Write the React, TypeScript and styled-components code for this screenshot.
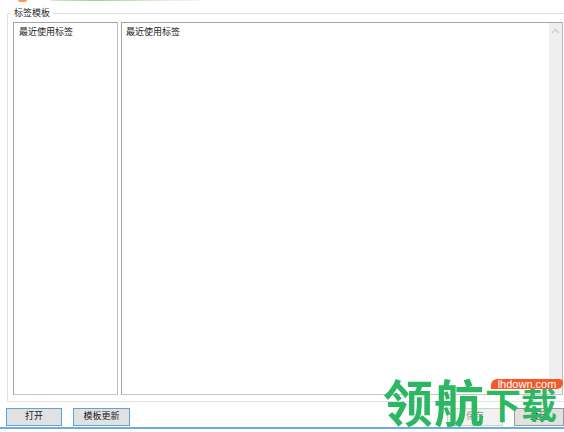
import React from "react";
import styled, { createGlobalStyle } from "styled-components";

const Global = createGlobalStyle`
  html, body { margin: 0; padding: 0; background: #fff; }
  body { font-family: "Liberation Sans", "Noto Sans CJK SC", sans-serif; }
`;

const Page = styled.div`
  position: relative;
  width: 564px;
  height: 432px;
  overflow: hidden;
  background: #fff;
  display: flex;
  flex-direction: column;
`;

const TopStrip = styled.div`
  height: 3px;
  display: flex;
  align-items: flex-start;
  padding-left: 18px;
  gap: 24px;
  flex-shrink: 0;
`;

const OrangeMark = styled.div`
  width: 9px;
  height: 2px;
  border-radius: 0 0 5px 5px;
  background: #f0a050;
`;

const GreenTrace = styled.div`
  width: 148px;
  height: 1px;
  background: linear-gradient(90deg, #cfe8c8, #9ed28f 30%, #d9eed3 70%, #eef6ec);
`;

const Group = styled.section`
  position: relative;
  margin: 10px 0 0 7px;
  width: 557px;
  height: 389px;
  box-sizing: border-box;
  border: 1px solid #dfe3e3;
  border-right: none;
  border-radius: 2px 0 0 2px;
  padding: 8px 5px 6px 5px;
  display: flex;
  gap: 3px;
  flex-shrink: 0;
`;

const GroupTitle = styled.span`
  position: absolute;
  top: -7px;
  left: 3px;
  padding: 0 3px;
  background: #fff;
  font-size: 9px;
  line-height: 13px;
  color: #2a2a2a;
`;

const Panel = styled.div<{ $w: number }>`
  width: ${(p) => p.$w}px;
  height: 100%;
  box-sizing: border-box;
  border: 1px solid #a5a5a5;
  border-bottom-color: #c4c4c4;
  border-right-color: #bdbdbd;
  display: flex;
  flex-shrink: 0;
`;

const PanelBody = styled.div<{ $left: number }>`
  flex: 1;
  padding: 3px 0 0 ${(p) => p.$left}px;
  font-size: 9px;
  line-height: 13px;
  color: #222;
`;

const Track = styled.div`
  width: 13px;
  background: #efefef;
  display: flex;
  justify-content: center;
  padding-top: 5px;
  box-sizing: border-box;
`;

const Footer = styled.div`
  margin-top: 6px;
  padding: 0 0 0 6px;
  display: flex;
  gap: 11px;
  height: 18px;
  flex-shrink: 0;
`;

const Btn = styled.button<{ $w: number; $ghost?: boolean; $dark?: boolean; $ml?: number }>`
  width: ${(p) => p.$w}px;
  height: 18px;
  margin-left: ${(p) => p.$ml ?? 0}px;
  padding: 0 0 2px;
  box-sizing: border-box;
  flex-shrink: 0;
  border: 1px solid ${(p) => (p.$ghost ? "#d0d0d0" : p.$dark ? "#9a9a9a" : "#5ba4dc")};
  background: ${(p) => (p.$ghost ? "#f2f2f2" : "#e1e1e1")};
  font: 9px/14px "Liberation Sans", "Noto Sans CJK SC", sans-serif;
  color: ${(p) => (p.$ghost ? "#999" : "#222")};
`;

const BottomEdge = styled.div`
  margin-top: 1px;
  height: 2px;
  background: #6aaee0;
  flex-shrink: 0;
`;

const Watermark = styled.div`
  position: absolute;
  left: 383px;
  top: 374px;
  display: flex;
  align-items: flex-end;
  font: 700 50px/52px "Noto Sans CJK SC", sans-serif;
  letter-spacing: 1px;
  color: #2cb863;
  white-space: nowrap;
`;

const WatermarkTail = styled.span`
  font-size: 36px;
  line-height: 46px;
  letter-spacing: 0;
`;

const Badge = styled.div`
  position: absolute;
  left: 491px;
  top: 379px;
  width: 72px;
  height: 10px;
  border-radius: 8px 5px 8px 0;
  background: #f4572a;
  color: #fff;
  font: 11px/11px "Liberation Sans", sans-serif;
  text-align: center;
`;

export default function App() {
  return (
    <Page>
      <Global />
      <TopStrip>
        <OrangeMark />
        <GreenTrace />
      </TopStrip>
      <Group>
        <GroupTitle>标签模板</GroupTitle>
        <Panel $w={105}>
          <PanelBody $left={5}>最近使用标签</PanelBody>
        </Panel>
        <Panel $w={442}>
          <PanelBody $left={4}>最近使用标签</PanelBody>
          <Track>
            <svg width="9" height="6" viewBox="0 0 9 6">
              <path d="M1 5 L4.5 1.5 L8 5" fill="none" stroke="#cfcfcf" strokeWidth="1.5" />
            </svg>
          </Track>
        </Panel>
      </Group>
      <Footer>
        <Btn $w={56}>打开</Btn>
        <Btn $w={57}>模板更新</Btn>
        <Btn $w={56} $ghost $ml={306}>保存</Btn>
        <Btn $w={50} $dark>关闭</Btn>
      </Footer>
      <BottomEdge />
      <Watermark>
        领航
        <WatermarkTail>下载</WatermarkTail>
      </Watermark>
      <Badge>lhdown.com</Badge>
    </Page>
  );
}
